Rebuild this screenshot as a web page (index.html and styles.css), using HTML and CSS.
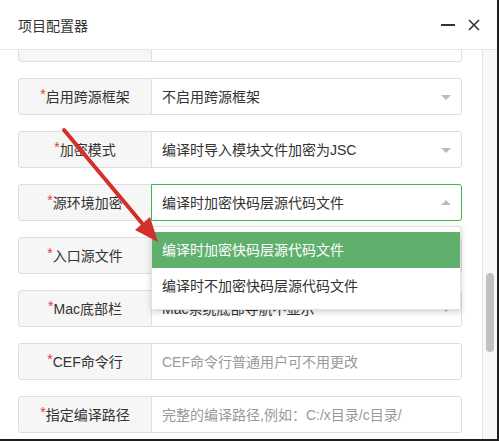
FILE: index.html
```html
<!DOCTYPE html>
<html lang="zh-CN">
<head>
    <meta charset="UTF-8">
    <title>项目配置器</title>
    <link rel="stylesheet" href="styles.css">
</head>
<body>
    <div class="window">
        <div class="header">
            <span class="title">项目配置器</span>
            <div class="tools">
                <span class="btn-min"></span>
                <svg class="btn-close" width="12" height="12" viewBox="0 0 12 12">
                    <path d="M1 1L11 11M11 1L1 11" stroke="#333" stroke-width="1.6" fill="none"/>
                </svg>
            </div>
        </div>
        <div class="main">
            <div class="content">
                <div class="form">
                    <div class="row">
                        <div class="label"></div>
                        <div class="field"></div>
                    </div>
                    <div class="row">
                        <div class="label"><i>*</i>启用跨源框架</div>
                        <div class="field select">不启用跨源框架<b class="caret"></b></div>
                    </div>
                    <div class="row">
                        <div class="label"><i>*</i>加密模式</div>
                        <div class="field select">编译时导入模块文件加密为JSC<b class="caret"></b></div>
                    </div>
                    <div class="row">
                        <div class="label"><i>*</i>源环境加密</div>
                        <div class="field select active">编译时加密快码层源代码文件<b class="caret up"></b></div>
                    </div>
                    <div class="row">
                        <div class="label"><i>*</i>入口源文件</div>
                        <div class="field select">index.html<b class="caret"></b></div>
                    </div>
                    <div class="row">
                        <div class="label"><i>*</i>Mac底部栏</div>
                        <div class="field select">Mac系统底部导航不显示<b class="caret"></b></div>
                    </div>
                    <div class="row">
                        <div class="label"><i>*</i>CEF命令行</div>
                        <div class="field placeholder">CEF命令行普通用户可不用更改</div>
                    </div>
                    <div class="row">
                        <div class="label"><i>*</i>指定编译路径</div>
                        <div class="field placeholder">完整的编译路径,例如：C:/x目录/c目录/</div>
                    </div>
                </div>
                <ul class="dropdown">
                    <li class="on">编译时加密快码层源代码文件</li>
                    <li>编译时不加密快码层源代码文件</li>
                </ul>
            </div>
            <div class="scrollbar"><div class="thumb"></div></div>
        </div>
        <svg class="pointer" width="499" height="441" viewBox="0 0 499 441">
            <line x1="64" y1="130" x2="146" y2="228" stroke="#d3302a" stroke-width="4" stroke-linecap="round"/>
            <polygon points="158,242 135,230 150,217" fill="#d3302a"/>
        </svg>
    </div>
</body>
</html>
```

FILE: styles.css
```css
body, html{
    margin: 0;
    width: 100%;
    height: 100%;
}
body{
    font-family: "Liberation Sans", "Noto Sans CJK SC", sans-serif;
    font-size: 14px;
    color: #333;
}
.window{
    position: relative;
    box-sizing: border-box;
    width: 499px;
    height: 441px;
    background: #fff;
    border-right: 2px solid #1e1e1e;
    border-bottom: 2px solid #1e1e1e;
    display: flex;
    flex-direction: column;
    overflow: hidden;
}
.header{
    height: 49px;
    flex-shrink: 0;
    border-bottom: 1px solid #e6e6e6;
    display: flex;
    align-items: center;
    justify-content: space-between;
    padding: 0 17px 0 18px;
}
.title{
    font-size: 14px;
    color: #333;
}
.tools{
    display: flex;
    align-items: center;
    gap: 13px;
}
.btn-min{
    display: block;
    width: 14px;
    height: 2px;
    background: #333;
}
.btn-close{
    display: block;
}
.main{
    flex: 1;
    display: flex;
    min-height: 0;
}
.content{
    flex: 1;
    position: relative;
    overflow: hidden;
}
.form{
    margin-top: -25px;
    padding-left: 18px;
    display: flex;
    flex-direction: column;
    gap: 16px;
}
.row{
    display: flex;
    height: 37px;
}
.label{
    box-sizing: border-box;
    width: 134px;
    flex-shrink: 0;
    background: #f6f6f6;
    border: 1px solid #dedede;
    border-radius: 3px 0 0 3px;
    display: flex;
    align-items: center;
    justify-content: center;
    line-height: 20px;
}
.label i{
    font-style: normal;
    color: #e4393c;
    align-self: flex-start;
    margin-top: 8px;
    line-height: 14px;
}
.field{
    position: relative;
    box-sizing: border-box;
    width: 311px;
    margin-left: -1px;
    border: 1px solid #dedede;
    border-radius: 0 3px 3px 0;
    display: flex;
    align-items: center;
    padding-left: 10px;
    line-height: 20px;
    background: #fff;
}
.field.placeholder{
    color: #999;
}
.field.active{
    border-color: #3cb84a;
}
.caret{
    position: absolute;
    right: 10px;
    top: 16px;
    width: 0;
    height: 0;
    border-left: 5px solid transparent;
    border-right: 5px solid transparent;
    border-top: 5px solid #bcbcbc;
}
.caret.up{
    top: 15px;
    border-top: 0;
    border-bottom: 5px solid #bcbcbc;
}
.dropdown{
    position: absolute;
    left: 151px;
    top: 176px;
    width: 310px;
    box-sizing: border-box;
    margin: 0;
    padding: 5px 0;
    list-style: none;
    background: #fff;
    border: 1px solid #e2e2e2;
    box-shadow: 0 2px 6px rgba(0, 0, 0, 0.18);
}
.dropdown li{
    height: 36px;
    line-height: 36px;
    padding-left: 10px;
    color: #333;
}
.dropdown li.on{
    background: #5fb06c;
    color: #fff;
}
.scrollbar{
    width: 14px;
    flex-shrink: 0;
    background: #f8f8f8;
    border-left: 1px solid #e3e3e3;
}
.thumb{
    width: 8px;
    height: 79px;
    margin: 223px 0 0 3px;
    border-radius: 4px;
    background: #c1c1c1;
}
.pointer{
    position: absolute;
    left: 0;
    top: 0;
    pointer-events: none;
}
```
